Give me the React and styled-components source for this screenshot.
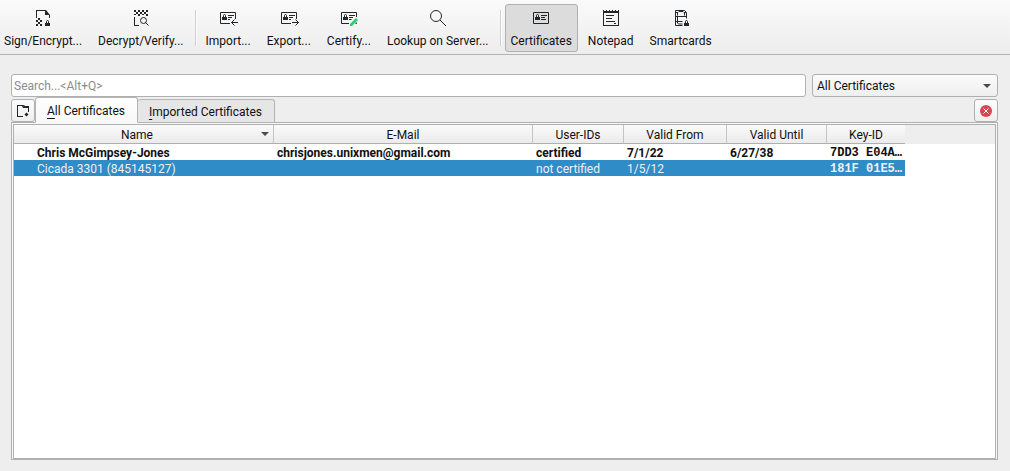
import React, { useState } from 'react'
import styled, { createGlobalStyle } from 'styled-components'

const ink = '#232629'

const Lock = ({ x, y }) => (
  <g transform={`translate(${x} ${y})`}>
    <path d='M0 3h5v3H0z' fill={ink} />
    <path d='M1.5 3V1.5a1 1 0 0 1 2 0V3' fill='none' stroke={ink} />
  </g>
)

const Card = () => (
  <>
    <path d='M3.5 5.5h15v11h-15z' fill='none' stroke={ink} />
    <path d='M5 10h5v3H5zM11 8h6v1h-6zM11 10h4v1h-4zM11 12h5v1h-5z' fill={ink} />
    <path d='M6.5 10V8.5a1 1 0 0 1 2 0V10' fill='none' stroke={ink} />
  </>
)

const SignIcon = () => (
  <Icon viewBox='0 0 22 22'>
    <path
      d='M4 3h10l4 5v3h-1V8h-4V4H5v7H4zM6 11h2v2H6zM4 13h2v2H4zM8 13h2v2H8zM6 15h2v2H6zM4 17h2v2H4zM8 17h2v2H8z'
      fill={ink}
    />
    <Lock x={13} y={13} />
  </Icon>
)

const DecryptIcon = () => (
  <Icon viewBox='0 0 22 22'>
    <path
      d='M4 3h2v2H4zM8 3h2v2H8zM12 3h2v2h-2zM16 3h2v2h-2zM6 5h2v2H6zM10 5h2v2h-2zM14 5h2v2h-2zM4 7h2v1H4zM8 7h2v2H8zM12 7h2v1h-2zM16 7h2v2h-2zM4 10h1v8h4v1H4z'
      fill={ink}
    />
    <circle cx='13.5' cy='13.5' r='3' fill='none' stroke={ink} />
    <path d='M15.5 15.5l3 3' stroke={ink} />
  </Icon>
)

const ImportIcon = () => (
  <Icon viewBox='0 0 22 22'>
    <Card />
    <path d='M13 12h8v7h-8z' fill='#f3f3f3' />
    <path d='M14.5 15.5H21M17.5 12.5l-3 3 3 3' fill='none' stroke={ink} />
  </Icon>
)

const ExportIcon = () => (
  <Icon viewBox='0 0 22 22'>
    <Card />
    <path d='M13 12h8v7h-8z' fill='#f3f3f3' />
    <path d='M14 15.5h6.5M17.5 12.5l3 3-3 3' fill='none' stroke={ink} />
  </Icon>
)

const CertifyIcon = () => (
  <Icon viewBox='0 0 22 22'>
    <Card />
    <path d='M11 19v-4l5-5h4v4l-5 5z' fill='#f3f3f3' />
    <path d='M12 19v-2l6-6 2 2-6 6z' fill='#2ecc71' />
  </Icon>
)

const LookupIcon = () => (
  <Icon viewBox='0 0 22 22'>
    <circle cx='9' cy='9' r='5.5' fill='none' stroke={ink} />
    <path d='M13 13l6 6' stroke={ink} />
  </Icon>
)

const CardIcon = () => (
  <Icon viewBox='0 0 22 22'>
    <Card />
  </Icon>
)

const NotepadIcon = () => (
  <Icon viewBox='0 0 22 22'>
    <path
      d='M3 3h1v1h2V3h1v1h2V3h1v1h2V3h1v1h2V3h1v1h2V3h1v16H3zM4 6v12h14V6zM6 8h8v1H6zM6 11h6v1H6zM6 14h9v1H6zM14 16h2v1h-2z'
      fill={ink}
      fillRule='evenodd'
    />
  </Icon>
)

const SmartcardIcon = () => (
  <Icon viewBox='0 0 22 22'>
    <path
      d='M12.5 18.5h-7v-15h9l2 2v6M6 5.5h2l1-1h4l1 1h2M7.5 6v2.500M14.5 6v2.500M5.5 9.500h11M7.5 10v4M5.5 14.5h7M7.5 15v1l1 1h4'
      fill='none'
      stroke={ink}
    />
    <Lock x={14} y={13} />
  </Icon>
)

const NewTabIcon = () => (
  <SmallIcon viewBox='0 0 16 16'>
    <path d='M2 2h6l1 2h5v5h-1V5H8L7 3H3v10h5v1H2z' fill={ink} />
    <path d='M8 2h1l1 1h4v2H9z' fill={ink} />
    <path d='M11 10h1v1h1v1h-1v1h-1v-1h-1v-1h1z' fill={ink} stroke={ink} strokeWidth='0.6' />
  </SmallIcon>
)

const CloseIcon = () => (
  <SmallIcon viewBox='0 0 16 16'>
    <circle cx='8' cy='8' r='6' fill='#da4453' />
    <path d='M5.5 5.5l5 5M10.5 5.5l-5 5' stroke='#fcfcfc' />
  </SmallIcon>
)

const actions = [
  { name: 'Sign/Encrypt...', icon: SignIcon },
  { name: 'Decrypt/Verify...', icon: DecryptIcon },
  null,
  { name: 'Import...', icon: ImportIcon },
  { name: 'Export...', icon: ExportIcon },
  { name: 'Certify...', icon: CertifyIcon },
  { name: 'Lookup on Server...', icon: LookupIcon },
  null,
  { name: 'Certificates', icon: CardIcon, view: true },
  { name: 'Notepad', icon: NotepadIcon, view: true },
  { name: 'Smartcards', icon: SmartcardIcon, view: true },
]

const columns = [
  { name: 'Name', width: 260 },
  { name: 'E-Mail', width: 259 },
  { name: 'User-IDs', width: 91 },
  { name: 'Valid From', width: 103 },
  { name: 'Valid Until', width: 100 },
  { name: 'Key-ID', width: 78 },
]

const certificates = [
  {
    name: 'Chris McGimpsey-Jones',
    email: 'chrisjones.unixmen@gmail.com',
    status: 'certified',
    from: '7/1/22',
    until: '6/27/38',
    keyId: '7DD3 E04A…',
    own: true,
  },
  {
    name: 'Cicada 3301 (845145127)',
    email: '',
    status: 'not certified',
    from: '1/5/12',
    until: '',
    keyId: '181F 01E5…',
  },
]

function App() {
  const [view, setView] = useState('Certificates')
  const [tab, setTab] = useState('all')
  const [selected, setSelected] = useState(1)

  return (
    <Window>
      <GlobalStyle />
      <Toolbar>
        {actions.map((action, i) =>
          action ? (
            <ToolButton
              key={action.name}
              $active={action.name === view}
              onClick={() => action.view && setView(action.name)}
            >
              <action.icon />
              {action.name}
            </ToolButton>
          ) : (
            <Separator key={i} />
          )
        )}
      </Toolbar>
      <Main>
        <FilterRow>
          <Search type='text' aria-label='Search' placeholder='Search...<Alt+Q>' />
          <SelectBox>
            <Select aria-label='Certificate filter'>
              <option>All Certificates</option>
            </Select>
            <Arrow />
          </SelectBox>
        </FilterRow>
        <TabRow>
          <SquareButton aria-label='New tab'>
            <NewTabIcon />
          </SquareButton>
          <Tabs role='tablist'>
            <Tab role='tab' aria-selected={tab === 'all'} $active={tab === 'all'} onClick={() => setTab('all')}>
              <span><u>A</u>ll Certificates</span>
            </Tab>
            <Tab role='tab' aria-selected={tab === 'imported'} $active={tab === 'imported'} onClick={() => setTab('imported')}>
              <span><u>I</u>mported Certificates</span>
            </Tab>
          </Tabs>
          <SquareButton aria-label='Close tab'>
            <CloseIcon />
          </SquareButton>
        </TabRow>
        <Frame>
          <TableArea>
            <Table>
              <colgroup>
                {columns.map((column) => (
                  <Column key={column.name} $width={column.width} />
                ))}
                <col />
              </colgroup>
              <thead>
                <tr>
                  {columns.map((column, i) => (
                    <HeadCell key={column.name} $last={i === columns.length - 1}>
                      <HeadLabel>
                        <span>{column.name}</span>
                        {i === 0 && <SortArrow />}
                      </HeadLabel>
                    </HeadCell>
                  ))}
                  <Filler />
                </tr>
              </thead>
              <tbody>
                {certificates.map((cert, i) => (
                  <Row key={cert.name} $own={cert.own} $selected={i === selected} onClick={() => setSelected(i)}>
                    <NameCell>{cert.name}</NameCell>
                    <Cell>{cert.email}</Cell>
                    <Cell>{cert.status}</Cell>
                    <Cell>{cert.from}</Cell>
                    <Cell>{cert.until}</Cell>
                    <KeyCell>{cert.keyId}</KeyCell>
                  </Row>
                ))}
              </tbody>
            </Table>
          </TableArea>
        </Frame>
      </Main>
    </Window>
  )
}

const GlobalStyle = createGlobalStyle`
* {
  box-sizing: border-box;
}

body {
  margin: 0;
  background: #eeeeee;
}

body, button, input, select {
  font-family: Roboto, 'Noto Sans', sans-serif;
  font-size: 12px;
  line-height: 16px;
  color: #101010;
}
`

const Window = styled.div`
min-height: 100vh;
display: flex;
flex-direction: column;
`

const Toolbar = styled.header`
display: flex;
gap: 4px;
padding: 4px 0 2px;
border-bottom: 1px solid #b4b4b4;
background: linear-gradient(#fafafa, #ededed);
`

const ToolButton = styled.button`
display: flex;
flex-direction: column;
align-items: center;
gap: 4px;
padding: 2px 5px;
border: 1px solid ${(props) => (props.$active ? '#b0b0b0' : 'transparent')};
border-radius: 3px;
background: ${(props) => (props.$active ? '#dcdcdc' : 'transparent')};
white-space: nowrap;

&:first-child {
  padding-left: 3px;
}
`

const Separator = styled.div`
width: 2px;
margin: 6px -1px 6px 1px;
border-left: 1px solid #d0d0d0;
border-right: 1px solid #fdfdfd;
`

const Icon = styled.svg`
width: 22px;
height: 22px;
`

const SmallIcon = styled.svg`
width: 16px;
height: 16px;
`

const Main = styled.main`
flex: 1;
display: flex;
flex-direction: column;
padding: 19px 12px 11px 11px;
`

const FilterRow = styled.div`
display: flex;
gap: 6px;
`

const Search = styled.input`
flex: 1;
min-width: 0;
height: 23px;
padding: 1px 2px 0;
border: 1px solid #b0b0b0;
border-radius: 3px;
background: white;

&::placeholder {
  color: #8c8c8c;
}
`

const SelectBox = styled.div`
display: flex;
align-items: center;
width: 186px;
height: 23px;
padding-right: 6px;
border: 1px solid #b0b0b0;
border-radius: 3px;
background: linear-gradient(#fbfbfb, #efefef);
`

const Select = styled.select`
flex: 1;
appearance: none;
padding: 1px 4px 0;
border: 0;
background: transparent;
`

const Arrow = styled.span`
border: 4px solid transparent;
border-top: 4px solid #4a4a4a;
border-bottom: 0;
`

const SortArrow = styled(Arrow)`
margin: 0 1px 3px 4px;
`

const TabRow = styled.div`
display: flex;
align-items: flex-start;
height: 25px;
`

const SquareButton = styled.button`
display: flex;
align-items: center;
justify-content: center;
width: 24px;
height: 23px;
margin-top: 2px;
padding: 0;
border: 1px solid #b0b0b0;
border-radius: 3px;
background: linear-gradient(#fcfcfc, #efefef);
`

const Tabs = styled.div`
flex: 1;
display: flex;
align-items: flex-end;
height: 26px;
z-index: 1;
`

const Tab = styled.button`
height: ${(props) => (props.$active ? '26px' : '24px')};
padding: 2px 12px 0 11px;
border: 1px solid #b4b4b4;
border-bottom-color: ${(props) => (props.$active ? '#f8f8f8' : '#b4b4b4')};
border-radius: 3px 3px 0 0;
background: ${(props) => (props.$active ? 'linear-gradient(#ffffff, #f8f8f8)' : '#e6e6e6')};

& + & {
  border-left: 0;
}

u {
  text-underline-offset: 3px;
}
`

const Frame = styled.section`
flex: 1;
display: flex;
padding: 1px 1px 0;
border: 1px solid #b0b0b0;
background: #f8f8f8;
`

const TableArea = styled.div`
flex: 1;
min-width: 0;
overflow: hidden;
border: 1px solid #b0b0b0;
background: white;
`

const Table = styled.table`
width: 100%;
table-layout: fixed;
border-collapse: separate;
border-spacing: 0;
`

const Column = styled.col`
width: ${(props) => props.$width}px;
`

const HeadCell = styled.th`
height: 19px;
padding: 2px 3px 0;
font-weight: normal;
border-bottom: 1px solid #b0b0b0;
border-right: ${(props) => (props.$last ? '0' : '1px solid #c4c4c4')};
background: linear-gradient(#fafafa, #ebebeb);
`

const HeadLabel = styled.div`
display: flex;
align-items: center;

span:first-child {
  flex: 1;
}
`

const Filler = styled.th`
padding: 0;
background: #eeeeee;
`

const Row = styled.tr`
font-weight: ${(props) => (props.$own ? 'bold' : 'normal')};
color: ${(props) => (props.$selected ? '#eff0f1' : '#101010')};

td {
  background: ${(props) => (props.$selected ? '#308cc6' : 'white')};
}
`

const Cell = styled.td`
height: 16px;
padding: 2px 3px 0;
line-height: 14px;
overflow: hidden;
white-space: nowrap;
`

const NameCell = styled(Cell)`
padding-left: 23px;
`

const KeyCell = styled(Cell)`
font-family: 'Liberation Mono', monospace;
font-weight: bold;
`

export default App
